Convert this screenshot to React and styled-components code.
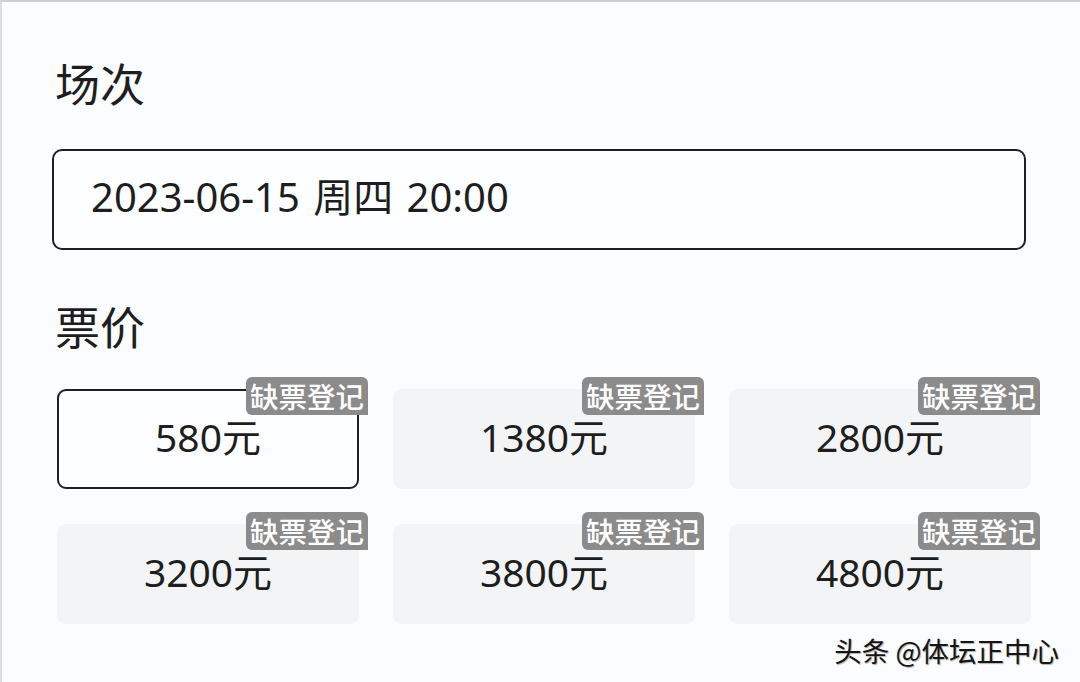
import React from "react";
import styled, { createGlobalStyle } from "styled-components";

const Global = createGlobalStyle`
  html, body { margin: 0; padding: 0; background: #fbfcfd; }
  body { font-family: "Noto Sans CJK SC", "Noto Sans", sans-serif; color: #1c1c1c; }
  * { box-sizing: border-box; }
`;

const Page = styled.div`
  position: relative;
  width: 1080px;
  height: 682px;
  overflow: hidden;
  background: #fbfcfd;
  border-top: 2px solid #cfd0d2;
  border-left: 2px solid #dcdddf;
  padding: 58px 0 0 50px;
`;

const Heading = styled.h2`
  margin: 0 0 0 3px;
  font-size: 45px;
  line-height: 46px;
  font-weight: 400;
  color: #1e1e1e;
  margin-top: ${(p) => p.$top || 0}px;
`;

const Select = styled.div`
  width: 974px;
  height: 101px;
  margin-top: 43px;
  border: 2px solid #1f1f1f;
  border-radius: 10px;
  background: #fdfeff;
  display: flex;
  align-items: center;
  padding: 0 0 9px 37px;
  font-family: "Noto Sans", "Noto Sans CJK SC", sans-serif;
  font-size: 40px;
  word-spacing: 3px;
  color: #1e1e1e;
`;

const Grid = styled.div`
  display: grid;
  grid-template-columns: repeat(3, 302px);
  column-gap: 34px;
  row-gap: 35px;
  margin: 40px 0 0 5px;
`;

const Card = styled.div`
  position: relative;
  height: 100px;
  border-radius: 9px;
  background: ${(p) => (p.$selected ? "#fdfeff" : "#f3f4f6")};
  border: ${(p) => (p.$selected ? "2px solid #1f1f1f" : "2px solid transparent")};
  display: flex;
  align-items: center;
  justify-content: center;
  font-family: "Noto Sans", "Noto Sans CJK SC", sans-serif;
  font-size: 39px;
  color: #1e1e1e;
  padding-bottom: 8px;
`;

const Badge = styled.span`
  position: absolute;
  top: -14px;
  right: -11px;
  height: 38px;
  padding: 0 4px;
  display: flex;
  align-items: center;
  background: #8b8b8c;
  color: #ffffff;
  font-family: "Noto Sans CJK SC", sans-serif;
  font-size: 28.5px;
  font-weight: 500;
  line-height: 1;
  border-radius: 6px 6px 0 6px;
`;

const Watermark = styled.div`
  position: absolute;
  right: 21px;
  bottom: 18px;
  font-size: 27.5px;
  line-height: 1;
  color: #151515;
  text-shadow: 1px 1px 1px rgba(0, 0, 0, 0.3), -1px 0 0 rgba(255, 255, 255, 0.6);
  white-space: pre;
`;

const prices = [
  { v: "580元", sel: true },
  { v: "1380元" },
  { v: "2800元" },
  { v: "3200元" },
  { v: "3800元" },
  { v: "4800元" },
];

export default function App() {
  return (
    <>
      <Global />
      <Page>
        <Heading>场次</Heading>
        <Select>2023-06-15 周四 20:00</Select>
        <Heading $top={53}>票价</Heading>
        <Grid>
          {prices.map((p) => (
            <Card key={p.v} $selected={p.sel}>
              {p.v}
              <Badge>缺票登记</Badge>
            </Card>
          ))}
        </Grid>
        <Watermark>头条 @体坛正中心</Watermark>
      </Page>
    </>
  );
}
